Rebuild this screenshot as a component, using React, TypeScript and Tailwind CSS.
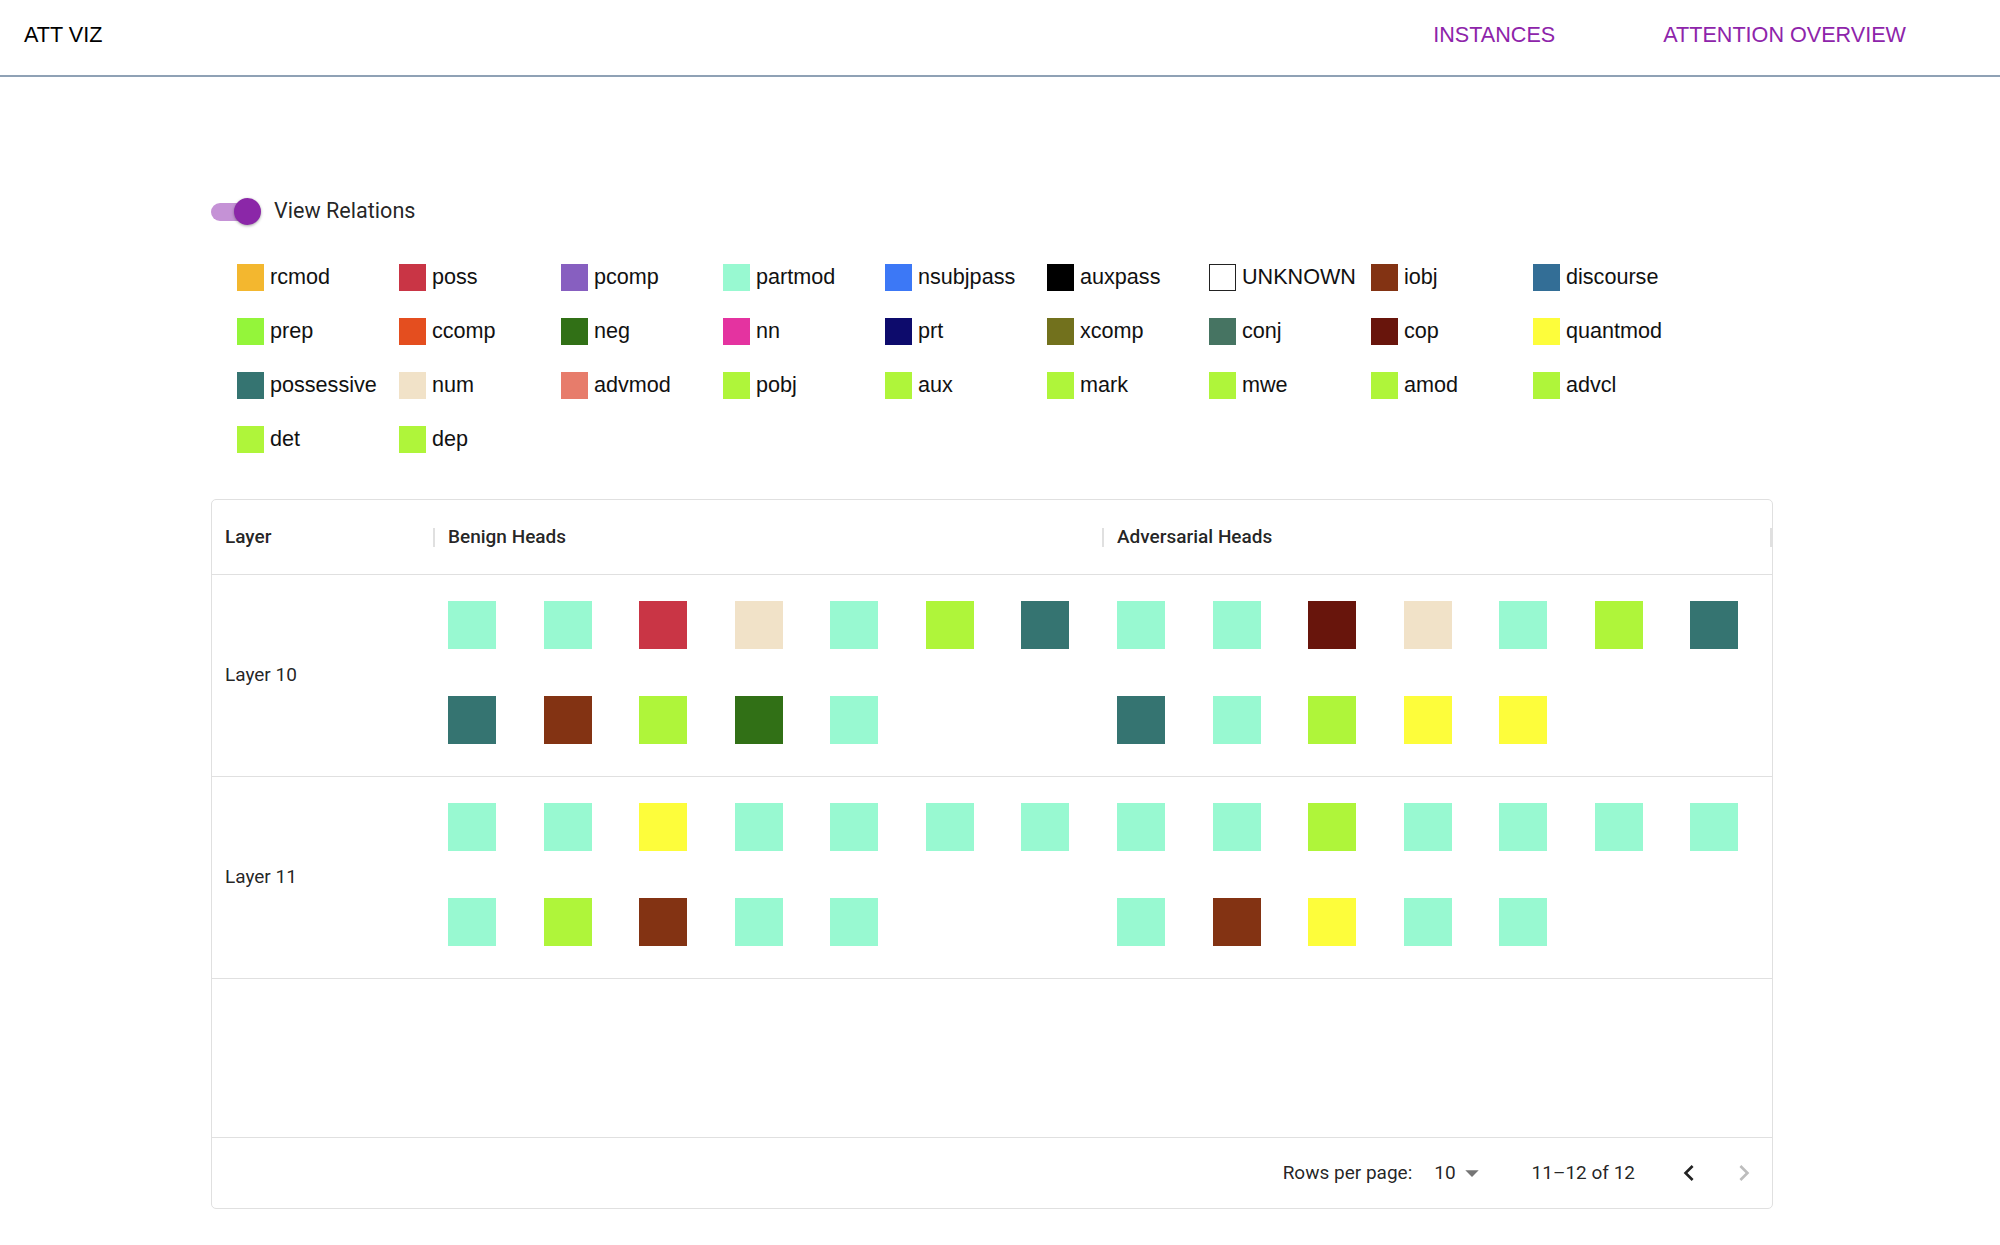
import React from "react";

const SW: Record<string, string> = {
  rcmod: "bg-[#f3b72f]",
  poss: "bg-[#c93545]",
  pcomp: "bg-[#875fc0]",
  partmod: "bg-[#98f9d1]",
  nsubjpass: "bg-[#3c78f6]",
  auxpass: "bg-[#000000]",
  UNKNOWN: "bg-white border border-[#222]",
  iobj: "bg-[#833313]",
  discourse: "bg-[#336e96]",
  prep: "bg-[#94f53a]",
  ccomp: "bg-[#e44e1f]",
  neg: "bg-[#317016]",
  nn: "bg-[#e433a0]",
  prt: "bg-[#0d0b6c]",
  xcomp: "bg-[#72711d]",
  conj: "bg-[#467462]",
  cop: "bg-[#68150c]",
  quantmod: "bg-[#fdfd3b]",
  possessive: "bg-[#357471]",
  num: "bg-[#f1e2c8]",
  advmod: "bg-[#e77c6b]",
  pobj: "bg-[#aff53a]",
  aux: "bg-[#aff53a]",
  mark: "bg-[#aff53a]",
  mwe: "bg-[#aff53a]",
  amod: "bg-[#aff53a]",
  advcl: "bg-[#aff53a]",
  det: "bg-[#aff53a]",
  dep: "bg-[#aff53a]",
};

const legend = [
  "rcmod", "poss", "pcomp", "partmod", "nsubjpass", "auxpass", "UNKNOWN", "iobj", "discourse",
  "prep", "ccomp", "neg", "nn", "prt", "xcomp", "conj", "cop", "quantmod",
  "possessive", "num", "advmod", "pobj", "aux", "mark", "mwe", "amod", "advcl",
  "det", "dep",
];

const rows = [
  {
    name: "Layer 10",
    benign: ["partmod", "partmod", "poss", "num", "partmod", "pobj", "possessive", "possessive", "iobj", "pobj", "neg", "partmod"],
    adv: ["partmod", "partmod", "cop", "num", "partmod", "pobj", "possessive", "possessive", "partmod", "pobj", "quantmod", "quantmod"],
  },
  {
    name: "Layer 11",
    benign: ["partmod", "partmod", "quantmod", "partmod", "partmod", "partmod", "partmod", "partmod", "pobj", "iobj", "partmod", "partmod"],
    adv: ["partmod", "partmod", "pobj", "partmod", "partmod", "partmod", "partmod", "partmod", "iobj", "quantmod", "partmod", "partmod"],
  },
];

const Sep = () => <div className="w-[2px] h-[19px] bg-[#e0e0e0]" />;

const Heads = ({ items }: { items: string[] }) => (
  <div className="grid grid-cols-[repeat(7,95.5px)] gap-y-[47px]">
    {items.map((r, i) => (
      <div key={i} className={`w-[48px] h-[48px] ${SW[r]}`} />
    ))}
  </div>
);

export default function App() {
  return (
    <div className="min-h-screen bg-white font-['Roboto',sans-serif] text-[rgba(0,0,0,0.87)]">
      <header className="h-[77px] pb-[5px] border-b-2 border-[#8fa1b5] flex items-center justify-between pl-[24px] pr-[94px] font-['Liberation_Sans',Arial,sans-serif] text-[21.6px]">
        <div className="text-black">ATT VIZ</div>
        <nav className="flex items-center gap-[108px] text-[#8e24aa]">
          <span>INSTANCES</span>
          <span>ATTENTION OVERVIEW</span>
        </nav>
      </header>

      <main className="pl-[211px]">
        <div className="mt-[109px] h-[51px] flex items-center">
          <div className="relative w-[50px] h-[27px] flex items-center">
            <div className="w-[46px] h-[18px] rounded-full bg-[#c592d6]" />
            <div className="absolute left-[23px] top-0 w-[27px] h-[27px] rounded-full bg-[#8b27a8] shadow-[0_1px_3px_rgba(0,0,0,0.35)]" />
          </div>
          <span className="ml-[13px] text-[21.6px]">View Relations</span>
        </div>

        <div className="mt-[13px] ml-[26px] grid grid-cols-[repeat(9,162px)] font-['Liberation_Sans',Arial,sans-serif] text-[21.6px] text-[#111]">
          {legend.map((l) => (
            <div key={l} className="h-[54px] flex items-center gap-[6px] whitespace-nowrap">
              <div className={`w-[27px] h-[27px] shrink-0 ${SW[l]}`} />
              <span>{l}</span>
            </div>
          ))}
        </div>

        <div className="mt-[33px] w-[1562px] border border-[#e0e0e0] rounded-[5px] text-[19px]">
          <div className="h-[75px] border-b border-[#e0e0e0] flex font-medium">
            <div className="w-[223px] shrink-0 flex items-center justify-between pl-[13px]">
              <span>Layer</span>
              <Sep />
            </div>
            <div className="w-[669px] shrink-0 flex items-center justify-between pl-[13px]">
              <span>Benign Heads</span>
              <Sep />
            </div>
            <div className="flex-1 min-w-0 flex items-center justify-between pl-[13px]">
              <span>Adversarial Heads</span>
              <Sep />
            </div>
          </div>

          {rows.map((r) => (
            <div key={r.name} className="h-[202px] border-b border-[#e0e0e0] flex">
              <div className="w-[223px] shrink-0 flex items-center pl-[13px]">{r.name}</div>
              <div className="w-[669px] shrink-0 pl-[13px] pt-[26px] overflow-hidden">
                <Heads items={r.benign} />
              </div>
              <div className="flex-1 min-w-0 pl-[13px] pt-[26px] overflow-hidden">
                <Heads items={r.adv} />
              </div>
            </div>
          ))}

          <div className="h-[158px]" />

          <div className="h-[71px] border-t border-[#e0e0e0] flex items-center justify-end pr-[12px]">
            <span>Rows per page:</span>
            <span className="ml-[22px]">10</span>
            <svg viewBox="0 0 24 24" className="w-[32px] h-[32px] fill-[#757575]">
              <path d="M7 10l5 5 5-5z" />
            </svg>
            <span className="ml-[44px]">11–12 of 12</span>
            <svg viewBox="0 0 24 24" className="ml-[38px] w-[32px] h-[32px] fill-[#222]">
              <path d="M15.41 16.59L10.83 12l4.58-4.59L14 6l-6 6 6 6 1.41-1.41z" />
            </svg>
            <svg viewBox="0 0 24 24" className="ml-[23px] w-[32px] h-[32px] fill-[#bdbdbd]">
              <path d="M8.59 16.59L13.17 12 8.59 7.41 10 6l6 6-6 6-1.41-1.41z" />
            </svg>
          </div>
        </div>
      </main>
    </div>
  );
}
